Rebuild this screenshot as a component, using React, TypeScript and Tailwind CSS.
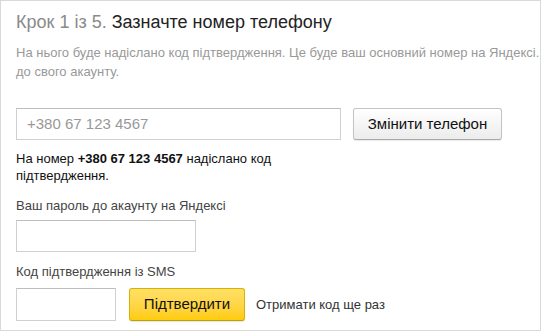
// Крок 1 із 5: підтвердження номера телефону
export default function App() {
  return (
    <div className="h-[331px] w-[542px] overflow-hidden bg-white font-['Liberation_Sans',Arial,sans-serif]">
      <div className="h-[331px] w-[541px] border border-[#d9d9d9] px-[15px] pt-[10px]">
        <h1 className="whitespace-nowrap text-[18px] leading-[22px] font-normal text-[#222]">
          <span className="text-[#8a8a8a]">Крок 1 із 5.</span> Зазначте номер телефону
        </h1>
        <p className="mt-[10px] whitespace-nowrap text-[13px] leading-[19px] text-[#999]">
          На нього буде надіслано код підтвердження. Це буде ваш основний номер на Яндексі.
          <br />
          до свого акаунту.
        </p>

        <div className="mt-[27px] flex items-center gap-[12px]">
          <div className="flex h-[32px] w-[325px] items-center border border-[#d0d0d0] border-t-[#bdbdbd] px-[10px] text-[15px] text-[#999]">
            +380 67 123 4567
          </div>
          <button className="h-[32px] w-[149px] rounded-[3px] border border-[#c4c4c4] border-b-[#a9a9a9] bg-gradient-to-b from-white to-[#ececec] text-[15px] text-[#111] shadow-[0_1px_1px_rgba(0,0,0,0.08)]">
            Змінити телефон
          </button>
        </div>

        <p className="mt-[10px] w-[280px] text-[13px] leading-[17px] text-[#111]">
          На номер <b>+380 67 123 4567</b> надіслано код підтвердження.
        </p>

        <p className="mt-[13px] text-[13px] leading-[17px] text-[#444]">Ваш пароль до акаунту на Яндексі</p>
        <div className="mt-[6px] h-[32px] w-[180px] border border-[#d0d0d0] border-t-[#bdbdbd]" />

        <p className="mt-[11px] text-[13px] leading-[17px] text-[#444]">Код підтвердження із SMS</p>
        <div className="mt-[8px] flex items-center">
          <div className="h-[33px] w-[100px] border border-[#d0d0d0] border-t-[#bdbdbd]" />
          <button className="ml-[13px] h-[33px] w-[116px] rounded-[3px] border border-[#d6b300] border-b-[#c29f00] bg-gradient-to-b from-[#ffe066] to-[#ffcc00] text-[15px] text-[#111] shadow-[0_1px_1px_rgba(0,0,0,0.1)]">
            Підтвердити
          </button>
          <span className="ml-[11px] text-[13px] text-[#333]">Отримати код ще раз</span>
        </div>
      </div>
    </div>
  );
}
